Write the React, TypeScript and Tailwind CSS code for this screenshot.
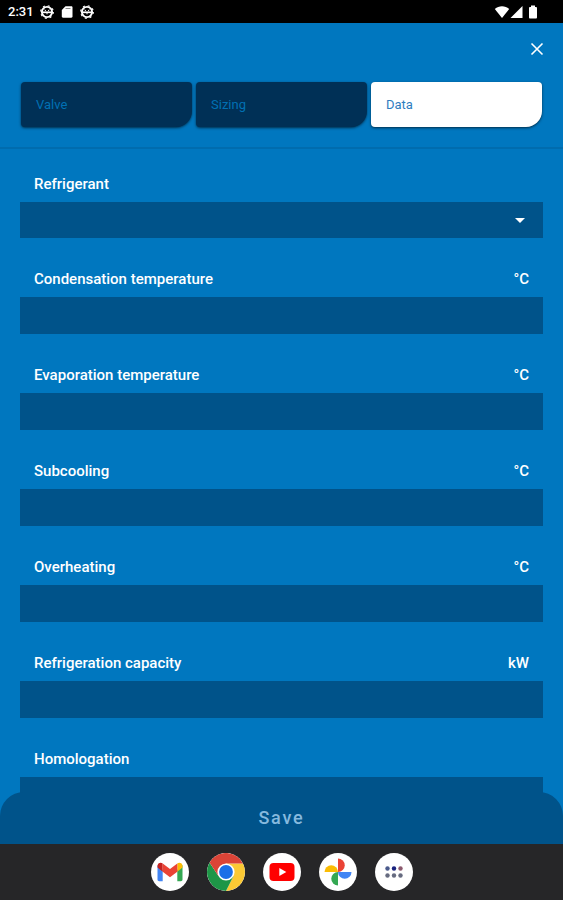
import { useState } from 'react';
import type { ReactNode } from 'react';

interface Field {
  id: string;
  label: string;
  unit?: string;
}

const tabs = ['Valve', 'Sizing', 'Data'];

const fields: Field[] = [
  { id: 'condensation', label: 'Condensation temperature', unit: '°C' },
  { id: 'evaporation', label: 'Evaporation temperature', unit: '°C' },
  { id: 'subcooling', label: 'Subcooling', unit: '°C' },
  { id: 'overheating', label: 'Overheating', unit: '°C' },
  { id: 'capacity', label: 'Refrigeration capacity', unit: 'kW' },
  { id: 'homologation', label: 'Homologation' },
];

function DebugIcon() {
  return (
    <svg viewBox="0 0 14 14" className="size-3.5" fill="none" stroke="white" aria-hidden="true">
      <circle cx="7" cy="7" r="5.1" strokeWidth="1.9" />
      <circle cx="7" cy="7" r="6.3" strokeWidth="1.2" strokeDasharray="2 2.95" />
      <path d="M2.5 7.300h9" strokeWidth="1.7" />
      <path d="M7 7.500v1.800M4.800 4.600l1 1.600M9.200 4.600l-1 1.600" strokeWidth="1" />
    </svg>
  );
}

function StatusBar() {
  return (
    <div className="flex h-[23px] shrink-0 items-center justify-between bg-black pr-[25px] pl-2 text-white">
      <div className="flex items-center gap-1.5">
        <span className="text-[13px] leading-4 font-medium">2:31</span>
        <DebugIcon />
        <svg viewBox="0 0 14 14" className="size-3.5" aria-hidden="true">
          <path d="M5.5 1.2h5.8c.7 0 1.2.5 1.2 1.2v9.2c0 .7-.5 1.2-1.2 1.2H3c-.7 0-1.2-.5-1.2-1.2V5z" fill="white" />
          <path d="M5.5 3.500h5" stroke="#888" strokeWidth="1" />
        </svg>
        <DebugIcon />
      </div>
      <div className="flex items-center">
        <svg viewBox="0 0 16 14" className="h-3.5 w-4" fill="white" aria-hidden="true">
          <path d="M8 13 .8 4C3 2.200 5.300 1.300 8 1.300s5 .9 7.200 2.700z" />
        </svg>
        <svg viewBox="0 0 14 14" className="size-3.5" fill="white" aria-hidden="true">
          <path d="M12.500 1v12H.5z" />
        </svg>
        <svg viewBox="0 0 10 14" className="ml-1 h-3.5 w-2.5" fill="white" aria-hidden="true">
          <path d="M3 .5h4V2h1c.5 0 1 .5 1 1v9.500c0 .5-.5 1-1 1H2c-.5 0-1-.5-1-1V3c0-.5.5-1 1-1h1z" />
        </svg>
      </div>
    </div>
  );
}

function Dock({ children }: { children: ReactNode }) {
  return (
    <nav aria-label="Apps" className="flex h-14 shrink-0 items-center justify-center gap-[18px] bg-[#262628]">
      {children}
    </nav>
  );
}

function AppButton({ name, children }: { name: string; children: ReactNode }) {
  return (
    <button aria-label={name} className="size-[38px] overflow-hidden rounded-full bg-white">
      <svg viewBox="0 0 38 38" className="size-full" aria-hidden="true">
        {children}
      </svg>
    </button>
  );
}

export default function App() {
  const [active, setActive] = useState('Data');

  return (
    <div className="flex h-screen flex-col bg-[#0077bf] font-[Roboto,sans-serif] text-white">
      <StatusBar />

      <header className="shrink-0 border-b-2 border-[#006cae] px-5 pb-5">
        <div className="flex h-[59px] items-start justify-end pt-[18px]">
          <button aria-label="Close" className="-mr-0.5">
            <svg viewBox="0 0 16 16" className="size-4" stroke="white" strokeWidth="1.6" aria-hidden="true">
              <path d="m2.500 2.500 11 11m0-11-11 11" />
            </svg>
          </button>
        </div>
        <div role="tablist" className="grid grid-cols-3 gap-1 px-px">
          {tabs.map((tab) => (
            <button
              key={tab}
              role="tab"
              aria-selected={tab === active}
              onClick={() => setActive(tab)}
              className={`h-[45px] rounded-sm rounded-br-2xl px-[15px] text-left text-[13px] shadow-sm shadow-black/50 ${
                tab === active ? 'bg-white text-[#2f7dc0]' : 'bg-[#003056] text-[#0070b4]'
              }`}
            >
              {tab}
            </button>
          ))}
        </div>
      </header>

      <main className="-mb-6 min-h-0 flex-1 overflow-y-auto px-5 pt-[25px] pb-12 [scrollbar-width:none]">
        <form id="data-form" className="flex flex-col gap-[31px] text-[15px] leading-5 font-medium">
          <div>
            <label htmlFor="refrigerant" className="block px-3.5 pb-2">
              Refrigerant
            </label>
            <div className="relative">
              <select id="refrigerant" className="block h-9 w-full appearance-none bg-[#00538a] px-3.5 outline-none">
                <option value=""></option>
                <option>R134a</option>
                <option>R404A</option>
                <option>R410A</option>
              </select>
              <svg
                viewBox="0 0 10 5"
                className="pointer-events-none absolute top-4 right-[18px] h-[5px] w-2.5"
                fill="white"
                aria-hidden="true"
              >
                <path d="M0 0h10L5 5z" />
              </svg>
            </div>
          </div>

          {fields.map((field) => (
            <div key={field.id}>
              <div className="flex justify-between px-3.5 pb-2">
                <label htmlFor={field.id}>{field.label}</label>
                {field.unit && <span>{field.unit}</span>}
              </div>
              <input id={field.id} type="text" className="block h-[37px] w-full bg-[#00538a] px-3.5 outline-none" />
            </div>
          ))}
        </form>
      </main>

      <button
        type="submit"
        form="data-form"
        className="relative h-[52px] shrink-0 rounded-t-3xl bg-[#00538a] text-lg font-medium tracking-widest text-[#86b9de]"
      >
        Save
      </button>

      <Dock>
        <AppButton name="Gmail">
          <path d="M6.500 12v14.500c0 1 .7 1.700 1.700 1.700h3.500V17z" fill="#4285f4" />
          <path d="M31.500 12v14.500c0 1-.7 1.700-1.700 1.700h-3.500V17z" fill="#34a853" />
          <path d="M6.500 14.500V13c0-3 3-4.200 5.200-2.600v8.300z" fill="#c5221f" />
          <path d="M31.500 14.500V13c0-3-3-4.200-5.200-2.600v8.300z" fill="#fbbc04" />
          <path d="M11.700 10.400 19 16l7.300-5.600v8.300L19 24.300l-7.300-5.600z" fill="#ea4335" />
        </AppButton>
        <AppButton name="Chrome">
          <path d="M19 10.500h17A19 19 0 0 1 19 38l7.400-14.700z" fill="#fbc934" />
          <path d="M2.500 9.500A19 19 0 0 0 19 38l7.400-14.700L19 19l-7.400 4.300z" fill="#1e9647" />
          <path d="M19 10.500h17A19 19 0 0 0 2.500 9.500l9.100 13.800z" fill="#db4437" />
          <circle cx="19" cy="19" r="8.600" fill="white" />
          <circle cx="19" cy="19" r="6.900" fill="#1a6fe8" />
        </AppButton>
        <AppButton name="YouTube">
          <rect x="6.500" y="10" width="25" height="18" rx="4" fill="#f00" />
          <path d="m16.300 15 7 4-7 4z" fill="white" />
        </AppButton>
        <AppButton name="Photos">
          <path d="M19 5.500a6.700 6.700 0 0 1 0 13.500z" fill="#ea4335" />
          <path d="M32.500 19a6.700 6.700 0 0 1-13.500 0z" fill="#4285f4" />
          <path d="M19 32.500a6.700 6.700 0 0 1 0-13.500z" fill="#34a853" />
          <path d="M5.500 19a6.700 6.700 0 0 1 13.500 0z" fill="#fbbc04" />
        </AppButton>
        <AppButton name="All apps">
          <circle cx="12.500" cy="15.500" r="2.200" fill="#4a5a8c" />
          <circle cx="19" cy="15.500" r="2.200" fill="#1a237e" />
          <circle cx="25.500" cy="15.500" r="2.200" fill="#8c5a6e" />
          <circle cx="12.500" cy="22.500" r="2.200" fill="#666b80" />
          <circle cx="19" cy="22.500" r="2.200" fill="#666b80" />
          <circle cx="25.500" cy="22.500" r="2.200" fill="#666b80" />
        </AppButton>
      </Dock>
    </div>
  );
}
